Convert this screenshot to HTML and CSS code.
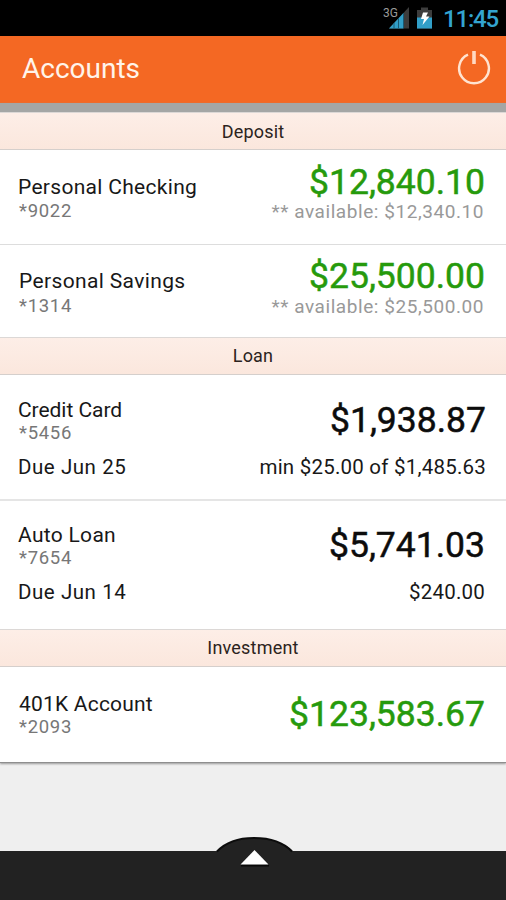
FILE: index.html
```html
<!DOCTYPE html>
<html lang="en">
<head>
<meta charset="utf-8">
<title>Accounts</title>
<link rel="stylesheet" href="styles.css">
</head>
<body>
<div class="screen">
  <div class="status">
    <svg class="status-icons" width="52" height="26" viewBox="0 0 52 26">
      <text class="net" x="0" y="13">3G</text>
      <path d="M6 24.500L26 3v21.500z" fill="#3c3c3c"/>
      <path d="M6 24.500L20 9.500v15z" fill="#319fc8"/>
      <path d="M11 19v5.500M15.500 14v10.500M20.500 9v15.500" stroke="#185b75" stroke-width="1"/>
      <path d="M34 6h4V3.500h7V6h4v18.500H34z" fill="#3d3d3d"/>
      <path d="M34 13.500h15v11H34z" fill="#319fc8"/>
      <path d="M40 8.500h5l-2 4h3.500l-7 8.500 1.500-6h-3z" fill="#fff"/>
    </svg>
    <span class="clock">11:45</span>
  </div>
  <header class="header">
    <h1>Accounts</h1>
    <svg class="power" width="34" height="36" viewBox="0 0 34 36">
      <path d="M11 4.700A14.900 14.900 0 1 0 23 4.700" fill="none" stroke="#ffe3d0" stroke-width="2.400"/>
      <path d="M17 1v13" stroke="#ffd9c2" stroke-width="3.600"/>
    </svg>
  </header>
  <main class="list">
    <h2 class="band first">Deposit</h2>
    <section class="row checking">
      <div class="left"><div class="name">Personal Checking</div><div class="num">*9022</div></div>
      <div class="right"><div class="amount green">$12,840.10</div><div class="avail">** available: $12,340.10</div></div>
    </section>
    <section class="row savings">
      <div class="left"><div class="name">Personal Savings</div><div class="num">*1314</div></div>
      <div class="right"><div class="amount green">$25,500.00</div><div class="avail">** available: $25,500.00</div></div>
    </section>
    <h2 class="band">Loan</h2>
    <section class="row credit">
      <div class="left"><div class="name">Credit Card</div><div class="num">*5456</div><div class="due">Due Jun 25</div></div>
      <div class="right"><div class="amount">$1,938.87</div><div class="min">min $25.00 of $1,485.63</div></div>
    </section>
    <section class="row auto">
      <div class="left"><div class="name">Auto Loan</div><div class="num">*7654</div><div class="due">Due Jun 14</div></div>
      <div class="right"><div class="amount">$5,741.03</div><div class="min">$240.00</div></div>
    </section>
    <h2 class="band">Investment</h2>
    <section class="row invest">
      <div class="left"><div class="name">401K Account</div><div class="num">*2093</div></div>
      <div class="right"><div class="amount green">$123,583.67</div></div>
    </section>
  </main>
  <footer class="drawer">
    <svg class="handle" width="80" height="30" viewBox="0 0 80 30">
      <path d="M0 15.500C8 6 22 1 38 1s32 5 40 14.500V30H0z" fill="#222"/>
      <path d="M1 14.500C9 6 22 1 38 1s30 5 38 13.500" fill="none" stroke="#0c0c0c" stroke-width="2"/>
      <path d="M25 28.500h28" stroke="#080808" stroke-width="2"/>
      <path d="M38.500 13L52.500 27.500h-28z" fill="#fff"/>
    </svg>
  </footer>
</div>
</body>
</html>
```
FILE: styles.css
```css
* { box-sizing: border-box; }
body { margin: 0; font-family: Roboto, "Liberation Sans", sans-serif; color: #181818; }
.screen { width: 506px; height: 900px; display: flex; flex-direction: column; background: #efefef; overflow: hidden; }
.status { height: 36px; background: #000; display: flex; justify-content: flex-end; align-items: flex-start; padding: 4px 8px 0 0; }
.status-icons { margin-right: 8px; }
.net { font-size: 12px; fill: #9a9a9a; }
.clock { width: 55px; color: #33a4d0; font-size: 24px; line-height: 30px; letter-spacing: -1.200px; font-weight: 500; }
.header { height: 67px; background: #f46823; display: flex; justify-content: space-between; align-items: flex-start; padding: 14px 15px 0 22px; }
h1 { margin: 0; font-size: 28px; line-height: 38px; font-weight: 400; color: #fff4ea; }
.list { border-top: 9px solid #a4a6a5; background: #fff; border-bottom: 1px solid #8e8e8e; box-shadow: 0 1px 2px #999; }
.band { margin: 0; height: 38px; border-top: 1px solid #dcd8d6; border-bottom: 1px solid #d5cfcc; background: linear-gradient(#fdeee7, #fbe7dd); font-size: 18px; line-height: 36px; font-weight: 400; text-align: center; letter-spacing: .2px; color: #2b2320; }
.band.first { padding-top: 1px; }
.row { display: flex; justify-content: space-between; padding: 0 21px 0 18px; }
.right { text-align: right; }
.name { font-size: 21px; line-height: 24px; letter-spacing: .3px; }
.num { font-size: 18.500px; line-height: 22px; letter-spacing: .7px; color: #777; padding-left: 1px; }
.due, .min { font-size: 20.500px; line-height: 24px; letter-spacing: .55px; }
.due { margin-top: 11px; }
.min { letter-spacing: .22px; }
.amount { font-size: 35.500px; line-height: 36px; font-weight: 400; color: #0c0c0c; -webkit-text-stroke: .5px currentColor; }
.amount.green { color: #269a0c; }
.avail { font-size: 19px; line-height: 22px; letter-spacing: .56px; color: #999; margin-top: 1px; margin-right: 1px; }
.checking { height: 95px; padding-top: 25px; border-bottom: 1px solid #ddd; }
.checking .num { margin-top: 1px; }
.checking .right { margin-top: -11px; }
.savings { height: 92px; padding-top: 24px; }
.savings .name { padding-left: 1px; letter-spacing: .36px; }
.savings .right { margin-top: -11px; }
.savings .num { margin-top: 2px; }
.savings .avail { margin-top: 2px; }
.credit { height: 126px; padding-top: 23px; border-bottom: 2px solid #e5e5e5; }
.credit .name { letter-spacing: -.05px; }
.credit .right { margin-right: -1px; }
.auto { height: 128px; padding-top: 22px; }
.credit .amount, .auto .amount, .invest .amount { padding-top: 4px; }
.credit .min, .auto .min { margin-top: 17px; }
.auto .due { margin-top: 11px; }
.invest { height: 95px; padding-top: 25px; }
.invest .name { padding-left: 1px; letter-spacing: .2px; }
.drawer { margin-top: auto; height: 49px; background: #222; display: flex; justify-content: center; padding-left: 6px; }
.handle { flex: none; margin-top: -14px; }
```
